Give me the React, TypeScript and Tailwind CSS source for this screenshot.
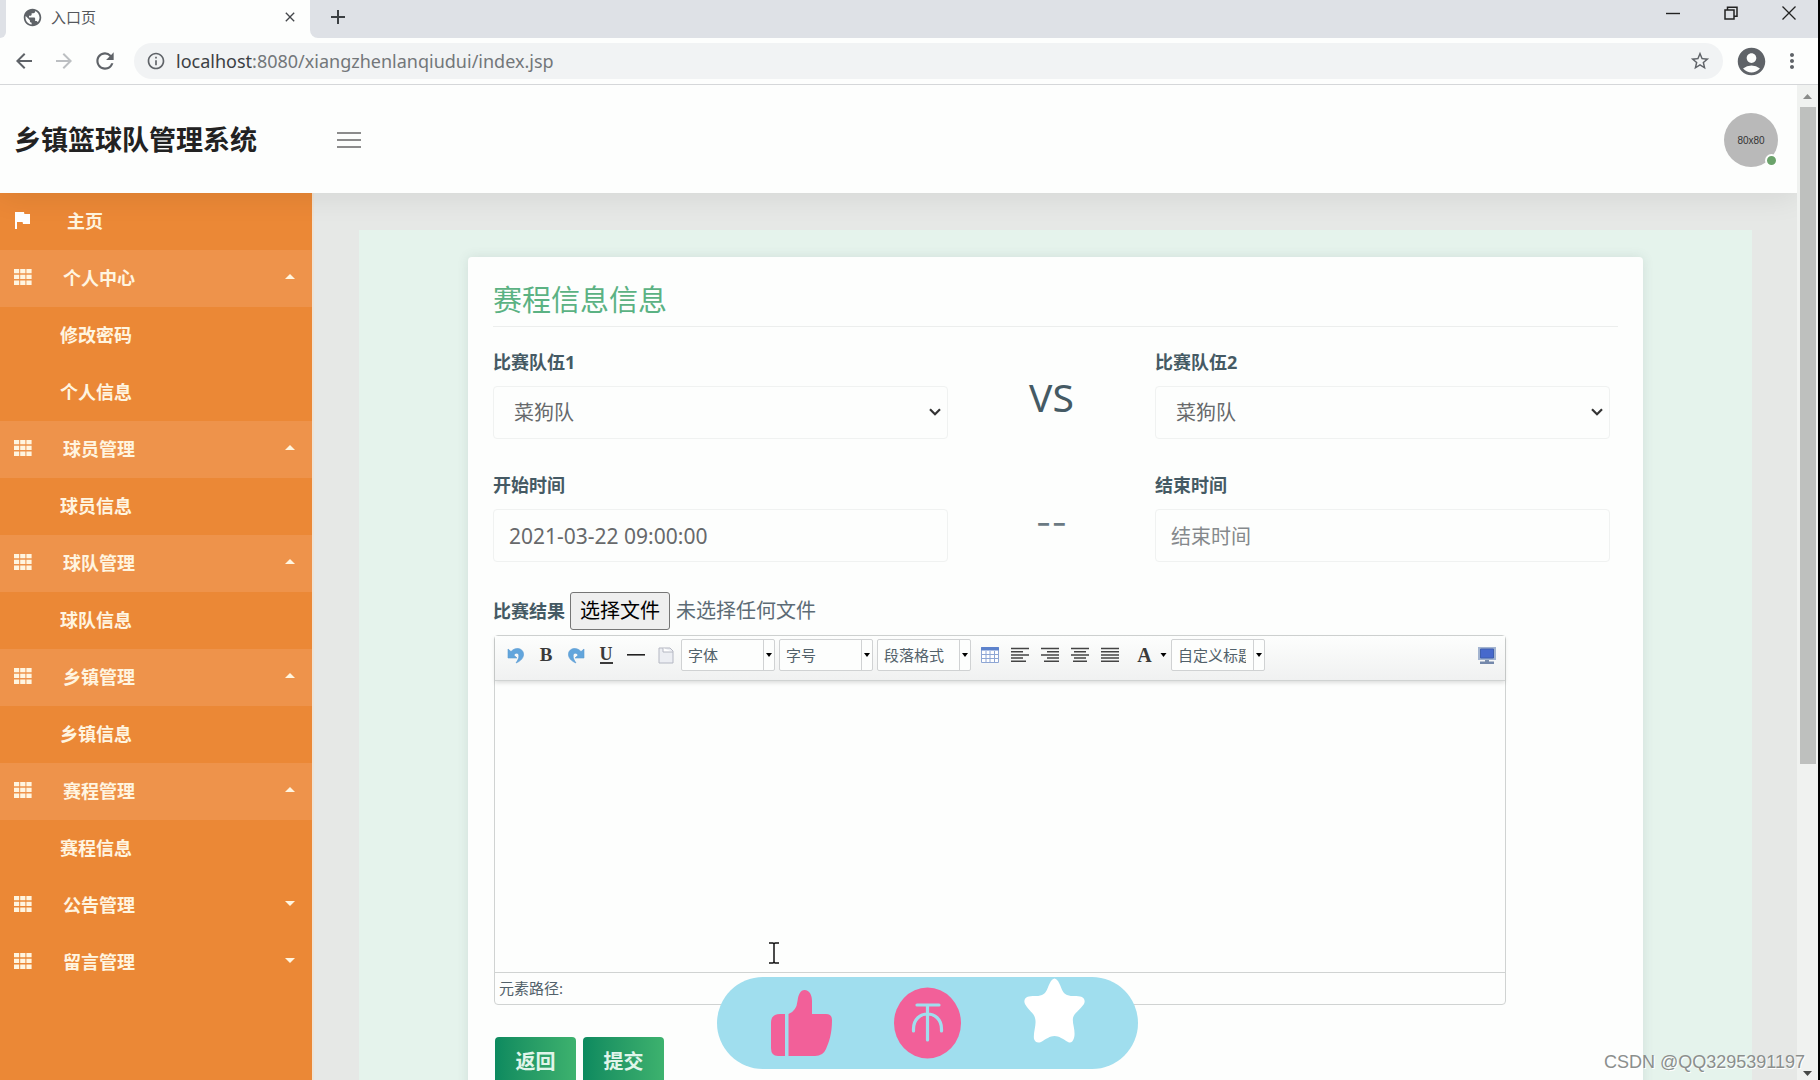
import React, { useRef } from 'react';
import {
  MdAccountCircle,
  MdAdd,
  MdArrowBack,
  MdArrowForward,
  MdClose,
  MdFlag,
  MdInfoOutline,
  MdMoreVert,
  MdPublic,
  MdRefresh,
  MdStarBorder,
} from 'react-icons/md';

interface MenuGroup {
  title: string;
  open: boolean;
  children: string[];
}

const menuGroups: MenuGroup[] = [
  { title: '个人中心', open: true, children: ['修改密码', '个人信息'] },
  { title: '球员管理', open: true, children: ['球员信息'] },
  { title: '球队管理', open: true, children: ['球队信息'] },
  { title: '乡镇管理', open: true, children: ['乡镇信息'] },
  { title: '赛程管理', open: true, children: ['赛程信息'] },
  { title: '公告管理', open: false, children: [] },
  { title: '留言管理', open: false, children: [] },
];

const BrowserBar: React.FC = () => (
  <div className="shrink-0 border-b border-[#d5d7d9] bg-[#fdfefd]">
    <div className="flex h-[38px] bg-[#dee1e6]">
      <div className="flex w-[6px] bg-[#fdfefd]">
        <div className="w-full rounded-br-lg bg-[#dee1e6]" />
      </div>
      <div className="flex w-[304px] items-center bg-[#fdfefd] pr-3 pb-1 pl-4">
        <MdPublic className="size-[21px] text-[#5f6368]" />
        <span className="ml-2 flex-1 text-[15px] text-[#55585c]">入口页</span>
        <button type="button" aria-label="关闭标签页" className="text-[#44474b]">
          <MdClose className="size-4" />
        </button>
      </div>
      <div className="flex flex-1 bg-[#fdfefd]">
        <div className="flex flex-1 justify-between rounded-bl-lg bg-[#dee1e6]">
          <button type="button" aria-label="新标签页" className="mb-1 ml-4 text-[#3c4043]">
            <MdAdd className="size-6" />
          </button>
          <div className="flex h-[26px] items-center text-[#222]">
            <button type="button" aria-label="最小化" className="flex w-[58px] justify-center">
              <svg className="size-[14px]" viewBox="0 0 14 14" stroke="currentColor" strokeWidth="1.4"><path d="M0 7.5h14" /></svg>
            </button>
            <button type="button" aria-label="还原" className="flex w-[58px] justify-center">
              <svg className="size-[14px]" viewBox="0 0 14 14" fill="none" stroke="currentColor" strokeWidth="1.5"><path d="M1 4h9v9H1zM3.500 4V1.300H13v9h-3" /></svg>
            </button>
            <button type="button" aria-label="关闭" className="flex w-[58px] justify-center">
              <svg className="size-[14px]" viewBox="0 0 14 14" stroke="currentColor" strokeWidth="1.3"><path d="M.5.5l13 13M13.500.5l-13 13" /></svg>
            </button>
          </div>
        </div>
      </div>
    </div>
    <div className="flex h-[46px] items-center pl-3 text-[#5f6368]">
      <button type="button" aria-label="后退" className="mr-4"><MdArrowBack className="size-6" /></button>
      <button type="button" aria-label="前进" className="mr-4 text-[#bcbfc2]"><MdArrowForward className="size-6" /></button>
      <button type="button" aria-label="刷新" className="mr-4"><MdRefresh className="size-[26px]" /></button>
      <div className="flex h-9 flex-1 items-center rounded-full bg-[#f1f3f4] px-3">
        <MdInfoOutline className="size-5" />
        <span className="ml-[10px] flex-1 text-[18px] text-[#73777a]">
          <span className="text-[#3c4043]">localhost</span>:8080/xiangzhenlanqiudui/index.jsp
        </span>
        <MdStarBorder className="size-[22px]" />
      </div>
      <button type="button" aria-label="用户" className="ml-3"><MdAccountCircle className="size-[33px]" /></button>
      <button type="button" aria-label="菜单" className="mr-[14px] ml-3"><MdMoreVert className="size-6" /></button>
    </div>
  </div>
);

const AppHeader: React.FC = () => (
  <header className="relative z-10 flex h-[108px] shrink-0 items-center bg-[#fdfefd] pt-[2px] pr-[19px] pl-[14px] shadow-[0_2px_30px_rgba(0,0,0,0.09)]">
    <h1 className="w-[323px] text-[27px] leading-9 font-bold text-[#222]">乡镇篮球队管理系统</h1>
    <button type="button" aria-label="展开菜单" className="flex w-6 flex-col gap-[5px]">
      <span className="h-[2px] bg-[#8c8c8c]" />
      <span className="h-[2px] bg-[#8c8c8c]" />
      <span className="h-[2px] bg-[#8c8c8c]" />
    </button>
    <div className="relative ml-auto flex size-[54px] items-center justify-center rounded-full bg-[#b9b9b9] font-['Liberation_Sans',sans-serif] text-[10px] text-[#333]">
      80x80
      <span className="absolute right-0 bottom-0 size-[13px] rounded-full border-2 border-[#fdfefd] bg-[#6ba36b]" />
    </div>
  </header>
);

const GridIcon: React.FC = () => (
  <svg className="mb-1 h-4 w-[18px]" viewBox="0 0 18 16" fill="currentColor">
    <path d="M0 0h5.200v4.300H0zM6.200 0h5.200v4.300H6.200zM12.400 0h5.200v4.300h-5.200zM0 5.800h5.200v4.300H0zM6.200 5.800h5.200v4.300H6.200zM12.400 5.800h5.200v4.300h-5.200zM0 11.600h5.200v4.300H0zM6.200 11.600h5.200v4.300H6.200zM12.400 11.600h5.200v4.300h-5.200z" />
  </svg>
);

const Sidebar: React.FC = () => (
  <nav className="w-[314px] shrink-0 border-r-2 border-[#eee3d5] bg-[#eb8836] text-[18px] font-bold text-[#fff5e0]">
    <a href="#home" className="flex h-[57px] items-center pl-[10px]">
      <MdFlag className="mb-1 size-6 text-white" />
      <span className="ml-[33px]">主页</span>
    </a>
    {menuGroups.map((group) => (
      <div key={group.title}>
        <a href="#menu" className={`flex h-[57px] items-center pr-[17px] pl-[14px] ${group.open ? 'bg-[#ee934b]' : ''}`}>
          <GridIcon />
          <span className="ml-[31px] flex-1">{group.title}</span>
          <svg className={`mb-1 h-[5px] w-[10px] ${group.open ? '' : 'rotate-180'}`} viewBox="0 0 10 5" fill="currentColor"><path d="M5 0l5 5H0z" /></svg>
        </a>
        {group.children.map((child) => (
          <a key={child} href="#page" className="flex h-[57px] items-center pl-[60px]">{child}</a>
        ))}
      </div>
    ))}
  </nav>
);

const TeamSelect: React.FC<{ id: string; label: string }> = ({ id, label }) => (
  <div>
    <label htmlFor={id} className="mb-[10px] block text-[18px] leading-7 font-bold text-[#455a64]">{label}</label>
    <div className="relative">
      <select id={id} className="h-[53px] w-full appearance-none rounded border border-[#f0f2f1] bg-transparent px-5 text-[20px] text-[#67696b]">
        <option>菜狗队</option>
      </select>
      <svg className="pointer-events-none absolute top-[22px] right-[7px] h-2 w-3" viewBox="0 0 12 8" fill="none" stroke="#333" strokeWidth="2.2"><path d="M1 1.200l5 5 5-5" /></svg>
    </div>
  </div>
);

const TimeInput: React.FC<{ id: string; label: string; value?: string }> = ({ id, label, value }) => (
  <div>
    <label htmlFor={id} className="mb-[10px] block text-[18px] leading-7 font-bold text-[#455a64]">{label}</label>
    <input
      id={id}
      type="text"
      defaultValue={value}
      placeholder={label}
      className="h-[53px] w-full rounded border border-[#f0f2f1] bg-transparent px-[15px] text-[21px] text-[#67696b] placeholder:text-[20px] placeholder:text-[#85898c]"
    />
  </div>
);

const ToolButton: React.FC<{ label: string; children: React.ReactNode }> = ({ label, children }) => (
  <button type="button" aria-label={label} title={label} className="flex h-[30px] w-[30px] shrink-0 items-center justify-center text-[#3a3a3a]">
    {children}
  </button>
);

const ToolSelect: React.FC<{ label: string }> = ({ label }) => (
  <div className="relative mr-1 flex h-8 w-[94px] rounded-[2px] border border-[#d0d2d3] bg-[#fdfefd]">
    <select aria-label={label} className="w-full appearance-none pr-[18px] pl-[6px] text-[15px] text-[#52616a]">
      <option>{label}</option>
    </select>
    <span className="pointer-events-none absolute inset-y-0 right-0 flex w-[11px] items-center justify-center border-l border-[#d0d2d3]">
      <svg className="h-1 w-[6px]" viewBox="0 0 6 4"><path d="M0 0h6L3 4z" /></svg>
    </span>
  </div>
);

const AlignIcon: React.FC<{ d: string }> = ({ d }) => (
  <svg className="h-4 w-[18px]" viewBox="0 0 18 16" stroke="#444" strokeWidth="1.5"><path d={d} /></svg>
);

const UndoIcon: React.FC<{ flip?: boolean }> = ({ flip }) => (
  <svg className={`h-[17px] w-[18px] ${flip ? '-scale-x-100' : ''}`} viewBox="0 0 18 17">
    <path d="M1 2v9h9L7 8.200C8.300 5.500 11.500 5.500 11.800 8.500c.2 2.500-.8 4.500-2.800 7.500C14 14 17 10.500 16.500 6.500 16 1.500 8.500-.8 4 4.600z" fill="#62a5dc" stroke="#5a9bd2" strokeWidth=".6" />
  </svg>
);

const Editor: React.FC = () => (
  <div className="mt-[5px] mr-28 ml-px rounded border border-[#d0d3d2]">
    <div className="flex h-[45px] items-center border-b border-[#d0d3d2] bg-linear-to-b from-[#fdfefd] to-[#f0f1f1] pr-[3px] pb-[6px] pl-[6px] shadow-[0_2px_4px_rgba(0,0,0,0.13)]">
      <ToolButton label="撤销"><UndoIcon /></ToolButton>
      <ToolButton label="加粗"><span className="font-['Liberation_Serif',serif] text-[19px] font-bold">B</span></ToolButton>
      <ToolButton label="重做"><UndoIcon flip /></ToolButton>
      <ToolButton label="下划线"><span className="border-b-2 font-['Liberation_Serif',serif] text-[18px] leading-4 font-bold">U</span></ToolButton>
      <ToolButton label="分隔线"><svg className="h-4 w-[18px]" viewBox="0 0 18 16"><path d="M0 7h18v1.600H0z" fill="#222" /></svg></ToolButton>
      <ToolButton label="清空文档">
        <svg className="h-[17px] w-4" viewBox="0 0 16 17" fill="#eceef3" stroke="#b4b7c2"><path d="M1 1h11l3 3v12H1z" /><path d="M5 1v4h10" fill="#fff" /></svg>
      </ToolButton>
      <ToolSelect label="字体" />
      <ToolSelect label="字号" />
      <ToolSelect label="段落格式" />
      <ToolButton label="表格">
        <svg className="h-4 w-[18px]" viewBox="0 0 18 16" fill="#fff" stroke="#8ea6d4"><path d="M.5.500h17v15H.5zM.5 7.500h17M.5 11.500h17M5 4v12M9 4v12M13.500 4v12" /><path d="M.5.500h17V3H.5z" fill="#5d82cc" stroke="#5d82cc" /></svg>
      </ToolButton>
      <ToolButton label="左对齐"><AlignIcon d="M0 1.500h18M0 4.700h12M0 7.900h18M0 11.100h12M0 14.300h15" /></ToolButton>
      <ToolButton label="右对齐"><AlignIcon d="M0 1.500h18M6 4.700h12M0 7.900h18M6 11.100h12M3 14.300h15" /></ToolButton>
      <ToolButton label="居中对齐"><AlignIcon d="M0 1.500h18M3 4.700h12M0 7.900h18M3 11.100h12M2 14.300h14" /></ToolButton>
      <ToolButton label="两端对齐"><AlignIcon d="M0 1.500h18M0 4.700h18M0 7.900h18M0 11.100h18M0 14.300h18" /></ToolButton>
      <button type="button" aria-label="字体颜色" className="flex w-[46px] items-center justify-center gap-2 pl-2 font-['Liberation_Serif',serif] text-[20px] font-bold text-[#3a3a3a]">
        A
        <svg className="h-1 w-[7px]" viewBox="0 0 6 4"><path d="M0 0h6L3 4z" /></svg>
      </button>
      <ToolSelect label="自定义标题" />
      <div className="ml-auto">
        <ToolButton label="预览">
          <svg className="h-[17px] w-[18px]" viewBox="0 0 18 17"><path d="M0 0h18v13H0z" fill="#a3b4d0" /><path d="M2.500 2h13v9h-13z" fill="#4769cc" stroke="#3f5fae" /><path d="M7 13h4v2H7z" fill="#7b8ead" /><path d="M2 14.500h14V17H2z" fill="#7488ab" /></svg>
        </ToolButton>
      </div>
    </div>
    <div contentEditable suppressContentEditableWarning role="textbox" aria-label="比赛结果内容" className="h-[291px]" />
    <div className="flex h-8 items-center border-t border-[#d0d3d2] pl-1 text-[15px] text-[#52616a]">元素路径:</div>
  </div>
);

const MatchForm: React.FC = () => {
  const fileRef = useRef<HTMLInputElement>(null);

  return (
    <form className="rounded-t bg-[#fdfefd] p-[25px] pb-16 shadow-[0_0_12px_rgba(60,80,90,0.12)]">
      <h2 className="border-b border-[#eceeed] pb-2 text-[29px] leading-9 text-[#5bb283]">赛程信息信息</h2>
      <div className="mt-[21px] grid grid-cols-[1fr_207px_1fr] gap-y-8 pr-2">
        <TeamSelect id="team1" label="比赛队伍1" />
        <div className="flex items-center justify-center pt-2 text-[39px] text-[#455a64]">VS</div>
        <TeamSelect id="team2" label="比赛队伍2" />
        <TimeInput id="start" label="开始时间" value="2021-03-22 09:00:00" />
        <div className="flex items-center justify-center pt-3 font-['Inter',sans-serif] text-[34px] text-[#6b7a82]">--</div>
        <TimeInput id="end" label="结束时间" />
      </div>
      <div className="mt-[30px] flex h-[38px] items-center text-[20px] text-[#5c6b75]">
        <label htmlFor="result" className="text-[18px] font-bold text-[#455a64]">比赛结果</label>
        <input ref={fileRef} id="result" type="file" className="hidden" />
        <button type="button" onClick={() => fileRef.current?.click()} className="mr-[6px] ml-[5px] h-[38px] rounded-[3px] border border-[#767676] bg-[#efefef] px-[9px] text-black">
          选择文件
        </button>
        <span>未选择任何文件</span>
      </div>
      <Editor />
      <div className="mt-8 flex gap-[7px] pl-[2px]">
        <button type="button" className="h-[50px] w-[81px] rounded bg-linear-to-r from-[#0c8a5f] to-[#3db26e] text-[20px] font-bold text-[#e0f5ea]">返回</button>
        <button type="submit" className="h-[50px] w-[81px] rounded bg-linear-to-r from-[#0c8a5f] to-[#3db26e] text-[20px] font-bold text-[#e0f5ea]">提交</button>
      </div>
    </form>
  );
};

// like / coin / favourite overlay
const ReactionBar: React.FC = () => (
  <div className="absolute bottom-[11px] left-[717px] flex h-[92px] w-[421px] rounded-full bg-[#a0deee]">
    <svg className="h-full w-full" viewBox="0 0 421 92">
      <g fill="#f26099">
        <path d="M68 37v42h-7q-7 0-7-8V46q0-9 9-9z" />
        <path d="M71.500 79V37q8-3 9-13c1-7 3-11 7-11 5 0 7.500 5 7.500 11v13H109q6 0 6 6c0 14-3 22-6 29q-3 7-11 7z" />
        <ellipse cx="210.500" cy="46" rx="33.500" ry="35.500" />
      </g>
      <path d="M200 28h22M210.500 28v35M196.500 54v-2c0-20 28-20 28 0v2" fill="none" stroke="#a0deee" strokeWidth="3.200" strokeLinecap="round" />
      <path d="M334 4q3.500-5 7 0c4 7 4 12 9 14 5 2 10 0 15 2q4 2 2 7c-4 6-10 9-11 14-1 6 3 13 1 20q-2 6-6 4c-5-3-9-6-13.500-6s-8.500 3-13.500 6q-5 2-7-3c-1-7 3-15 1-21-1-5-7-8-10-14q-2-5 2-7c5-2 10 0 15-2 5-2 5-7 9-14z" fill="#fff" />
    </svg>
  </div>
);

const Scrollbar: React.FC = () => (
  <div className="flex w-[21px] shrink-0 flex-col items-center bg-[#f0f2f0]">
    <svg className="mt-[9px] mb-2 h-[5px] w-[9px]" viewBox="0 0 9 5" fill="#8a8c8a"><path d="M4.500 0L9 5H0z" /></svg>
    <div className="h-[66%] w-4 bg-[#bec0be]" />
    <svg className="mt-auto mb-1 h-[5px] w-[9px]" viewBox="0 0 9 5" fill="#484a48"><path d="M0 0h9L4.500 5z" /></svg>
  </div>
);

const App: React.FC = () => {
  return (
    <div className="relative flex h-screen flex-col overflow-hidden border-r-2 border-black bg-[#fdfefd] font-['Noto_Sans','Noto_Sans_CJK_SC',sans-serif]">
      <BrowserBar />
      <div className="flex min-h-0 flex-1">
        <div className="flex min-w-0 flex-1 flex-col overflow-hidden">
          <AppHeader />
          <div className="flex min-h-0 flex-1">
            <Sidebar />
            <main className="flex-1 bg-[#e6e8e6] px-[45px] pt-[37px]">
              <div className="bg-[#e5f3ec] px-[109px] pt-[27px]">
                <MatchForm />
              </div>
            </main>
          </div>
        </div>
        <Scrollbar />
      </div>
      <ReactionBar />
      <svg className="absolute top-[942px] left-[769px] h-[22px] w-[10px]" viewBox="0 0 10 22" fill="none" stroke="#111" strokeWidth="1.500"><path d="M0 1h4l1 1 1-1h4M0 21h4l1-1 1 1h4M5 2v18" /></svg>
      <div className="absolute right-[13px] bottom-1 font-['Liberation_Sans',sans-serif] text-[18px] text-[#8b8f8d] [text-shadow:1px_1px_0_#fff]">CSDN @QQ3295391197</div>
    </div>
  );
};

export default App;
